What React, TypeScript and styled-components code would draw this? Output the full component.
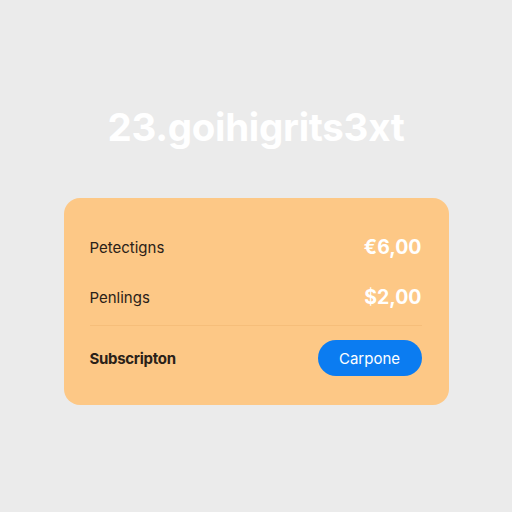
import React from 'react'
import styled, { createGlobalStyle } from 'styled-components'

const GlobalStyle = createGlobalStyle`
  html, body {
    margin: 0;
    padding: 0;
    background: #ebebeb;
  }
  body {
    font-family: Inter, "Noto Sans", sans-serif;
  }
`

const Page = styled.div`
  width: 512px;
  height: 512px;
  display: flex;
  flex-direction: column;
  align-items: center;
  box-sizing: border-box;
  padding-top: 103px;
`

const Title = styled.h1`
  margin: 0;
  font-size: 38.5px;
  font-weight: 700;
  letter-spacing: -0.3px;
  color: #ffffff;
  line-height: 48px;
`

const Card = styled.div`
  margin-top: 47px;
  width: 385px;
  height: 207px;
  box-sizing: border-box;
  background: #fdc886;
  border-radius: 16px;
  padding: 24px 27px 0 26px;
  display: flex;
  flex-direction: column;
`

const Row = styled.div<{ $height: number }>`
  display: flex;
  align-items: center;
  justify-content: space-between;
  height: ${({ $height }) => $height}px;
`

const Label = styled.span<{ $bold?: boolean }>`
  font-size: 15px;
  font-weight: ${({ $bold }) => ($bold ? 700 : 400)};
  letter-spacing: ${({ $bold }) => ($bold ? '-0.3px' : '0')};
  color: #2a2118;
`

const Amount = styled.span`
  font-size: 19.5px;
  font-weight: 700;
  color: #ffffff;
`

const Divider = styled.div`
  height: 1px;
  background: rgba(240, 180, 110, 0.5);
  margin: 3px 0 14px;
`

const Button = styled.button`
  width: 104px;
  height: 36px;
  border: none;
  border-radius: 18px;
  background: #0b7cf1;
  color: #ffffff;
  font-family: inherit;
  font-size: 15px;
  font-weight: 400;
  cursor: pointer;
`

const items = [
  { label: 'Petectigns', amount: '€6,00' },
  { label: 'Penlings', amount: '$2,00' },
]

export default function App() {
  return (
    <>
      <GlobalStyle />
      <Page>
        <Title>23.goihigrits3xt</Title>
        <Card>
          {items.map((it) => (
            <Row key={it.label} $height={50}>
              <Label>{it.label}</Label>
              <Amount>{it.amount}</Amount>
            </Row>
          ))}
          <Divider />
          <Row $height={36}>
            <Label $bold>Subscripton</Label>
            <Button>Carpone</Button>
          </Row>
        </Card>
      </Page>
    </>
  )
}
